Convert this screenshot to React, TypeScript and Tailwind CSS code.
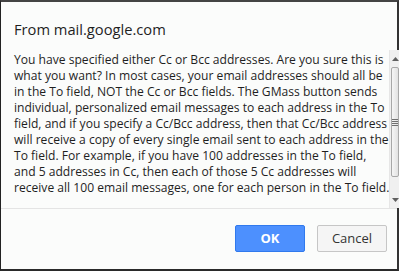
const lines = [
  "You have specified either Cc or Bcc addresses. Are you sure this is",
  "what you want? In most cases, your email addresses should all be",
  "in the To field, NOT the Cc or Bcc fields. The GMass button sends",
  "individual, personalized email messages to each address in the To",
  "field, and if you specify a Cc/Bcc address, then that Cc/Bcc address",
  "will receive a copy of every single email sent to each address in the",
  "To field. For example, if you have 100 addresses in the To field,",
  "and 5 addresses in Cc, then each of those 5 Cc addresses will",
  "receive all 100 email messages, one for each person in the To field.",
]

function ScrollBar() {
  return (
    <div className="flex w-[13px] flex-col border-l border-[#e6e6e6] bg-[#f0f0f0]">
      <div className="flex h-[17px] items-center justify-center">
        <svg width="7" height="4" viewBox="0 0 7 4">
          <path d="M0 4 L3.5 0 L7 4 Z" fill="#606060" />
        </svg>
      </div>
      <div className="mx-[1px] flex h-[110px] items-center justify-center rounded-[2px] border border-[#a8a8a8] bg-gradient-to-r from-[#f6f6f6] to-[#e2e2e2]">
        <div className="flex flex-col gap-[1px]">
          <div className="h-[1px] w-[6px] bg-[#707070]" />
          <div className="h-[1px] w-[6px] bg-[#707070]" />
          <div className="h-[1px] w-[6px] bg-[#707070]" />
          <div className="h-[1px] w-[6px] bg-[#707070]" />
        </div>
      </div>
      <div className="flex-1" />
      <div className="flex h-[17px] items-center justify-center">
        <svg width="7" height="4" viewBox="0 0 7 4">
          <path d="M0 0 L3.5 4 L7 0 Z" fill="#606060" />
        </svg>
      </div>
    </div>
  )
}

export default function App() {
  return (
    <div className="flex h-[271px] w-[399px] flex-col border-b-2 border-l border-r-2 border-t-2 border-b-[#2a2a2a] border-l-[#222] border-r-[#333] border-t-[#444] bg-[#fbfcfb] font-['Open_Sans',sans-serif] text-[#1f1f1f]">
      <div className="pl-[13px] pt-[17px] text-[14.7px] leading-[20px]">From mail.google.com</div>
      <div className="mt-[11px] flex h-[158px]">
        <div className="flex-1 pl-[13px] pt-[2px] text-[12.1px] leading-[16px]">
          {lines.map((l, i) => (
            <div key={i} className="whitespace-nowrap">
              {l}
            </div>
          ))}
        </div>
        <ScrollBar />
      </div>
      <div className="flex flex-1 items-start justify-end gap-[12px] border-t border-[#e4e4e4] pr-[10px] pt-[16px]">
        <button className="h-[27px] w-[70px] rounded-[2px] border border-[#3079ed] bg-[#4d90fe] text-[13px] font-bold text-white">
          OK
        </button>
        <button className="h-[27px] w-[70px] rounded-[2px] border border-[#c6c6c6] bg-[#f5f5f5] text-[13px] text-[#333]">
          Cancel
        </button>
      </div>
    </div>
  )
}
